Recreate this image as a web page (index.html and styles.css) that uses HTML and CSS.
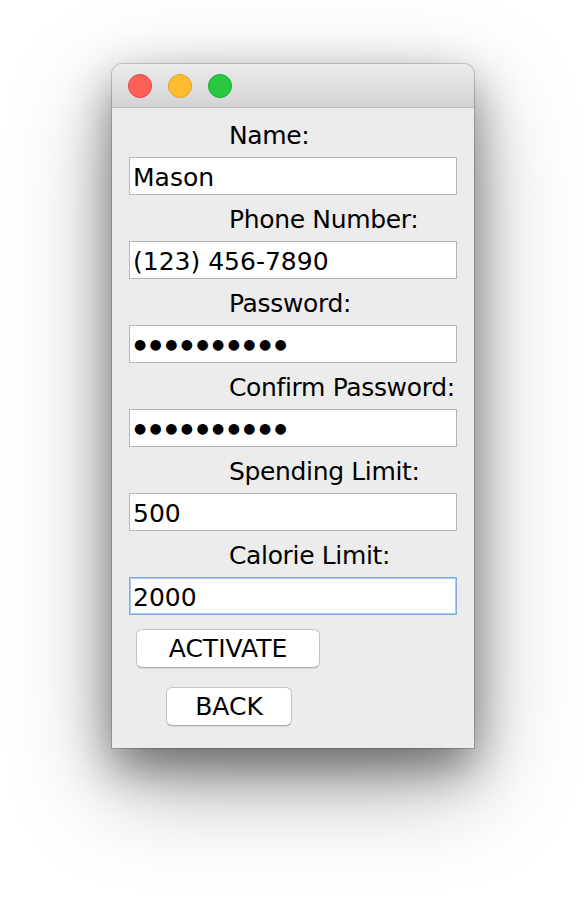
FILE: index.html
```html
<!DOCTYPE html>
<html lang="en">
<head>
<meta charset="utf-8">
<title>Activate Account</title>
<link rel="stylesheet" href="styles.css">
</head>
<body>
<div class="stage">
  <div class="window">
    <div class="titlebar">
      <span class="light red"></span>
      <span class="light yellow"></span>
      <span class="light green"></span>
    </div>
    <div class="form">
      <div class="label">Name:</div>
      <div class="field">Mason</div>
      <div class="label">Phone Number:</div>
      <div class="field">(123) 456-7890</div>
      <div class="label">Password:</div>
      <div class="field dots">●●●●●●●●●●</div>
      <div class="label">Confirm Password:</div>
      <div class="field dots">●●●●●●●●●●</div>
      <div class="label">Spending Limit:</div>
      <div class="field">500</div>
      <div class="label">Calorie Limit:</div>
      <div class="field focused">2000</div>
      <div class="buttons">
        <button class="btn btn-activate">ACTIVATE</button>
        <button class="btn btn-back">BACK</button>
      </div>
    </div>
  </div>
</div>
</body>
</html>
```

FILE: styles.css
```css
html, body {
  margin: 0;
  padding: 0;
  background: #ffffff;
}

.stage {
  display: flex;
  justify-content: center;
  padding-top: 64px;
  height: 844px;
  overflow: hidden;
}

.window {
  width: 362px;
  height: 684px;
  background: #ececec;
  border-radius: 10px 10px 0 0;
  box-shadow: 0 0 0 1px rgba(0, 0, 0, 0.18),
              0 20px 45px rgba(0, 0, 0, 0.42),
              0 35px 100px rgba(0, 0, 0, 0.34);
  font-family: "DejaVu Sans", "Liberation Sans", sans-serif;
  color: #000;
  display: flex;
  flex-direction: column;
}

.titlebar {
  height: 43px;
  border-bottom: 1px solid #b9b9b9;
  border-radius: 10px 10px 0 0;
  background: linear-gradient(#ebebeb, #d3d3d3);
  display: flex;
  align-items: center;
  gap: 16px;
  padding-left: 16px;
}

.light {
  width: 24px;
  height: 24px;
  border-radius: 50%;
  box-sizing: border-box;
}
.red { background: #fe5f57; border: 1px solid #e0443e; }
.yellow { background: #febc2e; border: 1px solid #dea123; }
.green { background: #28c840; border: 1px solid #1aab29; }

.form {
  padding: 3px 17px 0 17px;
  display: flex;
  flex-direction: column;
}

.label {
  height: 46px;
  box-sizing: border-box;
  padding-left: 100px;
  padding-top: 5px;
  line-height: 40px;
  font-size: 25px;
  letter-spacing: -0.35px;
  white-space: nowrap;
}

.field {
  height: 38px;
  box-sizing: border-box;
  background: #fff;
  border: 1px solid #b6b6b6;
  padding: 2px 0 0 3px;
  font-size: 25px;
  line-height: 36px;
  white-space: nowrap;
  overflow: hidden;
}

.field.dots {
  font-size: 14px;
  letter-spacing: 3.4px;
  padding: 0 0 0 4px;
  line-height: 36px;
}

.field.focused {
  border-color: #7fabe6;
  box-shadow: inset 0 0 0 1px #a9c8f2;
}

.buttons {
  display: flex;
  flex-direction: column;
  align-items: flex-start;
  gap: 19px;
  margin-top: 14px;
}

.btn {
  height: 39px;
  box-sizing: border-box;
  background: #ffffff;
  border: 1px solid #c4c4c4;
  border-bottom-color: #a9a9a9;
  border-radius: 6px;
  box-shadow: 0 1px 1px rgba(0, 0, 0, 0.08);
  font-family: "DejaVu Sans", "Liberation Sans", sans-serif;
  font-size: 25px;
  color: #000;
  padding: 0;
  line-height: 36px;
}

.btn-activate {
  width: 184px;
  margin-left: 7px;
}

.btn-back {
  width: 126px;
  margin-left: 37px;
}
```
